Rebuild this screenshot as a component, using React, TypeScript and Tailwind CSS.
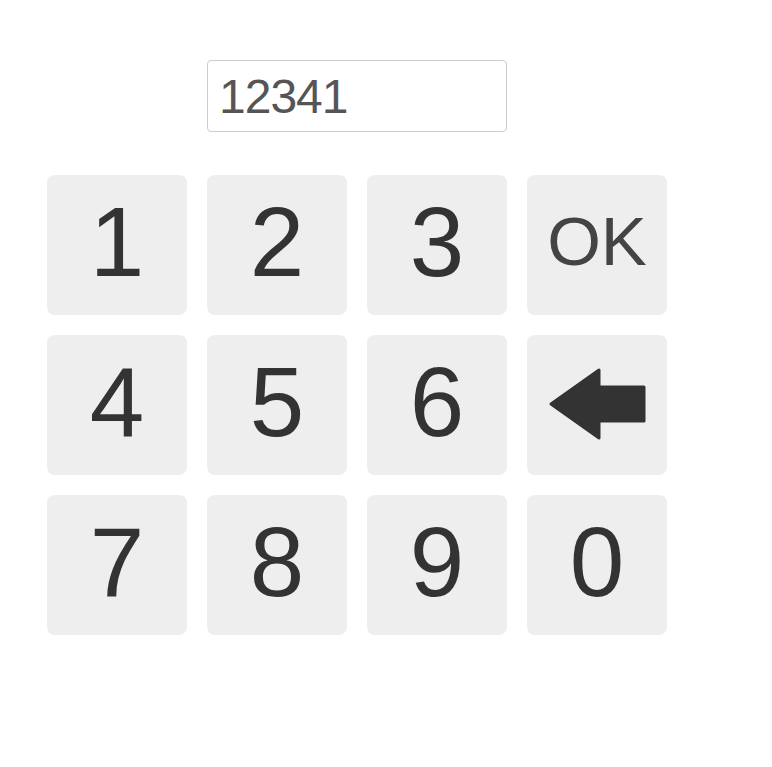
import { useState } from "react"

const keys = ["1", "2", "3", "OK", "4", "5", "6", "BACK", "7", "8", "9", "0"]

function BackArrow() {
  return (
    <svg width="140" height="140" viewBox="0 0 140 140" className="block">
      <path
        d="M24 69 L72 35 L72 52 L117 52 L117 86 L72 86 L72 103 Z"
        fill="#333"
        stroke="#333"
        strokeWidth="3"
        strokeLinejoin="round"
      />
    </svg>
  )
}

export default function App() {
  const [value, setValue] = useState("12341")

  const press = (k: string) => {
    if (k === "BACK") setValue((v) => v.slice(0, -1))
    else if (k !== "OK") setValue((v) => v + k)
  }

  return (
    <div className="min-h-screen bg-white pt-[60px] pl-[47px] font-['Liberation_Sans',Arial,sans-serif]">
      <div className="ml-[160px] w-[300px] h-[72px] border border-[#ccc] rounded-[4px] flex items-center px-[11px]">
        <input
          value={value}
          onChange={(e) => setValue(e.target.value)}
          className="w-full outline-none text-[48px] tracking-[-1px] leading-none text-[#555] bg-transparent"
        />
      </div>
      <div className="mt-[43px] grid grid-cols-[repeat(4,140px)] gap-[20px]">
        {keys.map((k) => (
          <button
            key={k}
            onClick={() => press(k)}
            className="w-[140px] h-[140px] rounded-[8px] bg-[#eee] flex items-center justify-center leading-none"
          >
            {k === "BACK" ? (
              <BackArrow />
            ) : k === "OK" ? (
              <span className="text-[69px] text-[#444] pb-[8px]">OK</span>
            ) : (
              <span className="text-[98px] text-[#333] pb-[7px]">{k}</span>
            )}
          </button>
        ))}
      </div>
    </div>
  )
}
